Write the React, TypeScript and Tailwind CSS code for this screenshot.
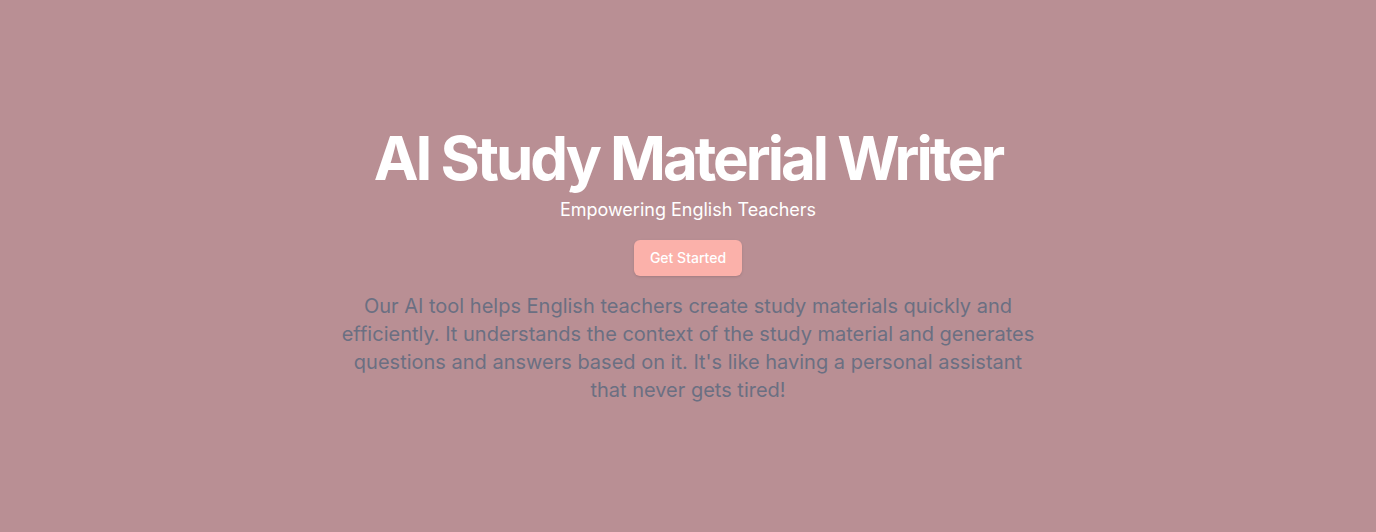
const App = () => {
    return (
        <div className="h-screen w-full bg-[#b98f94] flex flex-col items-center justify-center text-center" style={{ fontFamily: 'Inter, "Noto Sans", sans-serif' }}>
            <h1 className="text-6xl leading-none font-bold tracking-tighter text-white">AI Study Material Writer</h1>
            <p className="mt-2 text-lg text-white">Empowering English Teachers</p>
            <button className="mt-4 px-4 py-2 rounded-md bg-[#fbb1aa] text-white text-sm font-medium shadow">Get Started</button>
            <p className="mt-4 max-w-[700px] text-xl leading-7 text-[#6b6f82]">
                Our AI tool helps English teachers create study materials quickly and efficiently. It understands the context of the study material and generates questions and answers based on it. It's like having a personal assistant that never gets tired!
            </p>
        </div>
    )
}

export default App
